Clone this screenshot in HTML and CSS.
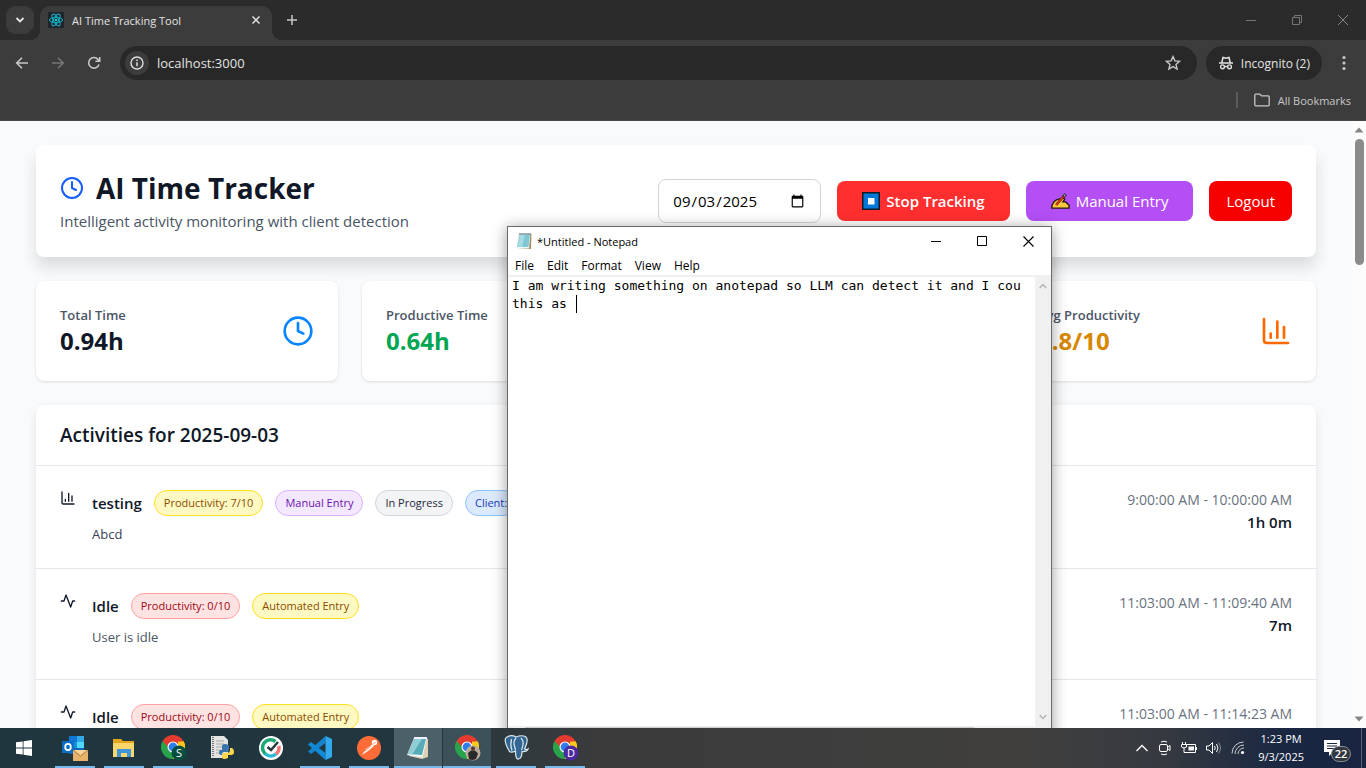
FILE: index.html
```html
<!DOCTYPE html>
<html lang="en-US">
<head>
<meta charset="utf-8">
<title>AI Time Tracking Tool</title>
<link rel="stylesheet" href="styles.css">
</head>
<body>
<svg class="defs" aria-hidden="true">
  <symbol id="clock" viewBox="0 0 24 24"><circle cx="12" cy="12" r="10"/><path d="M12 6v6l4 2"/></symbol>
  <symbol id="chart" viewBox="0 0 24 24"><path d="M3 3v16a2 2 0 0 0 2 2h16M8 17v-3M13 17V5M18 17V9"/></symbol>
  <symbol id="pulse" viewBox="0 0 24 24"><path d="M22 12h-3l-3 9L9 3 6 12H2"/></symbol>
  <symbol id="chrome" viewBox="0 0 24 24">
    <path fill="#e33b2e" d="M12 12 1.600 6A12 12 0 0 1 22.400 6z"/>
    <path fill="#fdc81c" d="M12 12 22.400 6A12 12 0 0 1 12 24z"/>
    <path fill="#28a34c" d="M12 12V24A12 12 0 0 1 1.600 6z"/>
    <path fill="#e33b2e" d="M12 6.500h10.700L22.400 6H12zM1.600 6l5.600 8.700L9 8z"/>
    <path fill="#28a34c" d="M1.600 6l5.600 9 5 2z"/>
    <path fill="#fdc81c" d="M12 24l5-9.200V6.500h5.700A12 12 0 0 1 12 24z"/>
    <circle cx="12" cy="12" r="5.500" fill="#fff"/><circle cx="12" cy="12" r="4.400" fill="#2f7de9"/>
  </symbol>
</svg>

<header class="browser">
  <div class="tabstrip">
    <button class="tab-search" aria-label="Search tabs"><svg width="10" height="10" viewBox="0 0 10 10"><path d="M1.500 3 5 6.500 8.500 3" fill="none" stroke="#e3e3e3" stroke-width="1.800"/></svg></button>
    <div class="tab">
      <svg width="16" height="16" viewBox="0 0 16 16"><rect width="16" height="16" rx="1" fill="#20232a"/><g fill="none" stroke="#12b5cb" stroke-width="1"><ellipse cx="8" cy="8" rx="6.600" ry="2.600"/><ellipse cx="8" cy="8" rx="6.600" ry="2.600" transform="rotate(60 8 8)"/><ellipse cx="8" cy="8" rx="6.600" ry="2.600" transform="rotate(120 8 8)"/></g><circle cx="8" cy="8" r="1.300" fill="#12d5eb"/></svg>
      <span class="tab-title">AI Time Tracking Tool</span>
      <button class="plain" aria-label="Close tab"><svg width="10" height="10" viewBox="0 0 10 10"><path d="M1.500 1.500l7 7m0-7l-7 7" stroke="#e3e3e3" stroke-width="1.500"/></svg></button>
    </div>
    <button class="plain new-tab" aria-label="New tab"><svg width="12" height="12" viewBox="0 0 12 12"><path d="M6 1v10M1 6h10" stroke="#c7c7c7" stroke-width="1.500"/></svg></button>
    <div class="window-buttons">
      <button class="plain" aria-label="Minimize"><svg width="12" height="12" viewBox="0 0 12 12"><path d="M1 6.500h10" stroke="#757575"/></svg></button>
      <button class="plain" aria-label="Restore"><svg width="12" height="12" viewBox="0 0 12 12"><path d="M1.500 3.500h7v7h-7zM3.500 3.500v-2h7v7h-2" fill="none" stroke="#757575"/></svg></button>
      <button class="plain" aria-label="Close"><svg width="12" height="12" viewBox="0 0 12 12"><path d="M1 1l10 10M11 1 1 11" stroke="#858585"/></svg></button>
    </div>
  </div>
  <div class="toolbar">
    <button class="plain nav" aria-label="Back"><svg width="14" height="14" viewBox="0 0 14 14"><path d="M13 7H2M7 1.700 1.700 7 7 12.300" fill="none" stroke="#c7c7c7" stroke-width="1.600"/></svg></button>
    <button class="plain nav" aria-label="Forward"><svg width="14" height="14" viewBox="0 0 14 14"><path d="M1 7h11M7 1.700 12.300 7 7 12.300" fill="none" stroke="#757575" stroke-width="1.600"/></svg></button>
    <button class="plain nav" aria-label="Reload"><svg width="14" height="14" viewBox="0 0 14 14"><path d="M12 8.500A5.300 5.300 0 1 1 11 3.400L12.500 5M12.700 1v4.300H8.400" fill="none" stroke="#c7c7c7" stroke-width="1.600"/></svg></button>
    <div class="address">
      <button class="site-info" aria-label="View site information"><svg width="14" height="14" viewBox="0 0 14 14"><circle cx="7" cy="7" r="6" fill="none" stroke="#dedede" stroke-width="1.400"/><path d="M7 6.200v4M7 3.600v1.500" stroke="#dedede" stroke-width="1.500"/></svg></button>
      <input class="url" aria-label="Address" value="localhost:3000">
      <button class="plain" aria-label="Bookmark this tab"><svg width="16" height="16" viewBox="0 0 16 16"><path d="M8 1.600l1.900 4.300 4.700.4-3.600 3.100 1.100 4.600L8 11.600 3.900 14 5 9.400 1.400 6.300l4.700-.4z" fill="none" stroke="#c7c7c7" stroke-width="1.400"/></svg></button>
    </div>
    <button class="incognito"><svg width="16" height="16" viewBox="0 0 16 16"><path d="M1 8h14M3.800 7.500 5 2.500l3 .7 3-.7 1.200 5" fill="none" stroke="#e3e3e3" stroke-width="1.500"/><g fill="none" stroke="#e3e3e3" stroke-width="1.400"><circle cx="4.500" cy="11.800" r="1.900"/><circle cx="11.500" cy="11.800" r="1.900"/><path d="M6.400 11.500h3.200"/></g></svg>Incognito (2)</button>
    <button class="plain more" aria-label="Menu"><svg width="4" height="16" viewBox="0 0 4 16" fill="#c7c7c7"><circle cx="2" cy="2.500" r="1.600"/><circle cx="2" cy="8" r="1.600"/><circle cx="2" cy="13.500" r="1.600"/></svg></button>
  </div>
  <div class="bookmarks">
    <span class="divider"></span>
    <button class="plain all-bookmarks"><svg width="16" height="14" viewBox="0 0 16 14"><path d="M.800 11.800V2.200q0-1 1-1h4l1.700 1.700h6.700q1 0 1 1v7.900q0 1-1 1H1.800q-1 0-1-1z" fill="none" stroke="#c7c7c7" stroke-width="1.300"/></svg>All Bookmarks</button>
  </div>
</header>

<div class="viewport">
  <main class="page">
    <section class="card masthead">
      <div>
        <h1><svg class="line blue" width="24" height="24"><use href="#clock"/></svg>AI Time Tracker</h1>
        <p>Intelligent activity monitoring with client detection</p>
      </div>
      <div class="actions">
        <input class="date" type="date" value="2025-09-03" aria-label="Date">
        <button class="btn stop"><svg width="18" height="18" viewBox="0 0 18 18"><path d="M0 0h18v18H0z" fill="#111c2b"/><path d="M1.500 1.500h15v15h-15z" fill="#0078d7"/><path d="M6 6h6.500v6.500H6z" fill="#fff"/></svg>Stop Tracking</button>
        <button class="btn manual"><svg width="19" height="18" viewBox="0 0 20 18"><path d="M1 16.500v-2.500Q3 8 8 7l5-1 1.500 1-2 3h3l3.500 3.500v3z" fill="#ffc83d" stroke="#1d1712" stroke-width="1.400"/><path d="M5.500 13 14 3.500" stroke="#1d1712" stroke-width="2.600"/><path d="M5 13.500 14 3.500" stroke="#f03a17" stroke-width="1.700"/><path d="M13 4.500l2.500-2.700" stroke="#1d1712" stroke-width="3"/><path d="M13.500 4l1.500-1.700" stroke="#bbb" stroke-width="1.300"/></svg>Manual Entry</button>
        <button class="btn logout">Logout</button>
      </div>
    </section>

    <section class="stats">
      <div class="card stat"><div><h2>Total Time</h2><strong>0.94h</strong></div><svg class="line sky" width="32" height="32"><use href="#clock"/></svg></div>
      <div class="card stat"><div><h2>Productive Time</h2><strong class="green">0.64h</strong></div></div>
      <div class="card stat"></div>
      <div class="card stat"><div><h2>Avg Productivity</h2><strong class="amber">2.8/10</strong></div><svg class="line orange" width="32" height="32"><use href="#chart"/></svg></div>
    </section>

    <section class="card activities">
      <h2>Activities for 2025-09-03</h2>
      <article>
        <svg class="line" width="16" height="16"><use href="#chart"/></svg>
        <div class="info">
          <div class="tags"><h3>testing</h3><span class="tag yellow">Productivity: 7/10</span><span class="tag purple">Manual Entry</span><span class="tag gray">In Progress</span><span class="tag lightblue">Client:</span></div>
          <p>Abcd</p>
        </div>
        <div class="when"><time>9:00:00 AM - 10:00:00 AM</time><b>1h 0m</b></div>
      </article>
      <article class="auto">
        <svg class="line" width="16" height="16"><use href="#pulse"/></svg>
        <div class="info">
          <div class="tags"><h3>Idle</h3><span class="tag red">Productivity: 0/10</span><span class="tag yellow">Automated Entry</span></div>
          <p>User is idle</p>
        </div>
        <div class="when"><time>11:03:00 AM - 11:09:40 AM</time><b>7m</b></div>
      </article>
      <article class="auto">
        <svg class="line" width="16" height="16"><use href="#pulse"/></svg>
        <div class="info">
          <div class="tags"><h3>Idle</h3><span class="tag red">Productivity: 0/10</span><span class="tag yellow">Automated Entry</span></div>
        </div>
        <div class="when"><time>11:03:00 AM - 11:14:23 AM</time></div>
      </article>
    </section>
  </main>
  <div class="scrollbar">
    <svg width="10" height="6" viewBox="0 0 10 6"><path d="M5 .500 9.500 5.500h-9z" fill="#858585"/></svg>
    <span class="thumb"></span>
    <svg width="10" height="6" viewBox="0 0 10 6"><path d="M5 5.500 9.500.500h-9z" fill="#858585"/></svg>
  </div>
</div>

<section class="notepad" aria-label="Notepad">
  <div class="np-title">
    <svg width="16" height="18" viewBox="0 0 16 18"><path d="M3 2h12.500L15 17h-3L1 16z" fill="#a88f63"/><path d="M3 2h11.500L13 16.500H.500z" fill="#eef8fa"/><path d="M3.500 3h10.500L12.500 15H1z" fill="#80c7d6"/><path d="M4 3h5L6 15H1.500z" fill="#a5dbe5"/><path d="M3.500 2h11" stroke="#3d5c66" stroke-width="2" stroke-dasharray="1 1"/></svg>
    <span>*Untitled - Notepad</span>
    <div class="np-buttons">
      <button class="plain" aria-label="Minimize"><svg width="11" height="11" viewBox="0 0 11 11"><path d="M0 5.500h10" stroke="#000"/></svg></button>
      <button class="plain" aria-label="Maximize"><svg width="11" height="11" viewBox="0 0 11 11"><path d="M.500.500h9v9h-9z" fill="none" stroke="#000"/></svg></button>
      <button class="plain" aria-label="Close"><svg width="11" height="11" viewBox="0 0 11 11"><path d="M.500.500l10 10m0-10l-10 10" stroke="#000" stroke-width="1.100"/></svg></button>
    </div>
  </div>
  <nav class="np-menu"><button class="plain">File</button><button class="plain">Edit</button><button class="plain">Format</button><button class="plain">View</button><button class="plain">Help</button></nav>
  <div class="np-body">
    <textarea aria-label="Text" spellcheck="false" wrap="off">I am writing something on anotepad so LLM can detect it and I cou
this as </textarea>
    <span class="caret"></span>
    <div class="np-vscroll">
      <svg width="8" height="6" viewBox="0 0 8 6"><path d="M.700 5 4 1.500 7.300 5" fill="none" stroke="#b5b5b5" stroke-width="1.500"/></svg>
      <svg width="8" height="6" viewBox="0 0 8 6"><path d="M.700 1 4 4.500 7.300 1" fill="none" stroke="#b5b5b5" stroke-width="1.500"/></svg>
    </div>
  </div>
  <div class="np-hscroll"><span></span></div>
</section>

<footer class="taskbar">
  <button class="start" aria-label="Start"><svg width="16" height="16" viewBox="0 0 16 16" fill="#fff"><path d="M0 2.300 6.700 1.400v6.200H0zM7.500 1.300 16 0v7.600H7.500zM0 8.400h6.700v6.200L0 13.700zM7.500 8.400H16V16l-8.500-1.300z"/></svg></button>
  <button class="app open" aria-label="Outlook"><svg width="28" height="26" viewBox="0 0 28 26"><path d="M8 1h15v18H8z" fill="#1066b5"/><path d="M8 1h8v6H8z" fill="#0f78d4"/><path d="M16 1h7v6h-7z" fill="#32a9e7"/><path d="M16 7h7v6h-7z" fill="#50d9ff"/><path d="M8 7h8v6H8z" fill="#1490df"/><path d="M1 6h12v12H1z" fill="#0a6fc4"/><ellipse cx="7" cy="12" rx="2.800" ry="3.200" fill="none" stroke="#fff" stroke-width="1.800"/><path d="M12 15h15v11H12z" fill="#e8b26b"/><path d="M12 15l7.500 6 7.500-6" fill="#f8d49a" stroke="#a87636"/></svg></button>
  <button class="app open" aria-label="File Explorer"><svg width="24" height="24" viewBox="0 0 24 24"><path d="M1 3h8l2 2h11v6H1z" fill="#e4a61a"/><path d="M1 7h21v14H1z" fill="#fbd66b"/><path d="M5 21v-8h14v8h-4v-4H9v4z" fill="#3f94db"/></svg></button>
  <button class="app open" aria-label="Chrome, profile S"><svg width="28" height="26" viewBox="0 0 28 26"><use href="#chrome" x="2" y="0" width="24" height="24"/><circle cx="20" cy="18" r="7.500" fill="#064e3e"/><text class="badge" x="20" y="22">S</text></svg></button>
  <button class="app" aria-label="Python"><svg width="26" height="26" viewBox="0 0 26 26"><path d="M2 1h13l4 4v18H2z" fill="#e4e4e2"/><path d="M4 2v20" stroke="#777" stroke-width="2" stroke-dasharray="1 1"/><path d="M7 6h8M7 9h8M7 12h6M7 15h3M7 18h3" stroke="#a7a7a7"/><path d="M13 15v-4q0-2 3-2t4 2v4q0 2-2 2h-3q-2 0-2 3h-1q-2 0-2-3t3-2z" fill="#3875ac"/><path d="M21 13h2q2 1 2 4t-3 3h-3q0 4-3 4t-3-2v-2q0-2 2-2h3q3 0 3-3z" fill="#ffd748"/></svg></button>
  <button class="app" aria-label="Tracker"><svg width="24" height="24" viewBox="0 0 24 24"><circle cx="12" cy="12" r="12" fill="#fff"/><g fill="none" stroke-width="3.600"><path d="M16.500 5.500A8 8 0 1 0 6.500 18" stroke="#19a974"/><path d="M6.500 18A8 8 0 0 0 17 18" stroke="#26b9d6"/><path d="M17 18a8 8 0 0 0 2.800-8" stroke="#ef7777"/></g><path d="M8.500 11l3.500 3 7-8" fill="none" stroke="#263a3d" stroke-width="2.400"/></svg></button>
  <button class="app open" aria-label="Visual Studio Code"><svg width="24" height="24" viewBox="0 0 24 24"><path d="M17.500 0v7L3 18 0 15.500z" fill="#1683c9"/><path d="M0 8.500 3 6l14.500 11v7z" fill="#1289d4"/><path d="M17.500 0 24 3v18l-6.500 3z" fill="#32a9ef"/></svg></button>
  <button class="app open" aria-label="Postman"><svg width="24" height="24" viewBox="0 0 24 24"><circle cx="12" cy="12" r="12" fill="#ff6c37"/><circle cx="17.500" cy="6.500" r="2.700" fill="#fff"/><path d="M15 8.500l2 1.500-6 5-6 4 4-6z" fill="#fff"/><path d="M16.500 7.500l2-1M8 15l6-5" stroke="#ff6c37" stroke-width=".8"/></svg></button>
  <button class="app open active" aria-label="Notepad"><svg width="24" height="24" viewBox="0 0 24 24"><path d="M20 2l2 1v18l-6 2-13-3z" fill="#ddd0b0"/><path d="M8 2h13l-4.500 19.500L1 19z" fill="#eefafa"/><path d="M8 3h12l-4 16-14-1z" fill="#58abb9"/><path d="M8 3h8L6.500 18.300 2 18z" fill="#90cdd5"/><path d="M8 2h13" stroke="#eef" stroke-width="2"/></svg></button>
  <button class="app open grouped" aria-label="Chrome, incognito"><svg width="28" height="26" viewBox="0 0 28 26"><use href="#chrome" x="2" y="0" width="24" height="24"/><circle cx="20" cy="18" r="7.500" fill="#b9aa9b"/><path d="M16 24l-1-6 3-2.500h4l3 3-2 5.500q-4 2-7 0z" fill="#29292b"/><circle cx="20" cy="13.500" r="2" fill="#54382c"/></svg></button>
  <button class="app open" aria-label="pgAdmin"><svg width="25" height="25" viewBox="0 0 25 25"><path d="M4 1.500Q8-.5 12 2q6-2.500 10 0 3 3-1.500 12 2 1 3.500 0-1 3-6 2.500 0 7-3.500 7.500-3 .5-3-8-4 2-6 .5Q0 7 1.500 3.500 2.500 2 4 1.500z" fill="#336791" stroke="#dbe8ef" stroke-width="1.200"/><path d="M8 15.500Q6 10 7.500 4M12 3q-3 3-1.500 8l1 4M17 3q4 4 .5 12" fill="none" stroke="#dbe8ef" stroke-width="1.200"/></svg></button>
  <button class="app open" aria-label="Chrome, profile D"><svg width="28" height="26" viewBox="0 0 28 26"><use href="#chrome" x="2" y="0" width="24" height="24"/><circle cx="20" cy="18" r="7.500" fill="#4c2a9e"/><text class="badge" x="20" y="22">D</text></svg></button>
  <div class="tray">
    <svg width="14" height="14" viewBox="0 0 14 14"><path d="M1.500 10 7 4.500l5.500 5.500" stroke-width="1.300"/></svg>
    <svg width="14" height="16" viewBox="0 0 14 16"><rect x="1.500" y="4.500" width="8" height="7" rx="1.500"/><path d="M9.500 7.500l2.500-2v5l-2.500-2M3 2q3-1.500 6 0M3 14q3 1.500 6 0"/></svg>
    <svg width="16" height="14" viewBox="0 0 16 14"><path d="M5.500 3.500h9v8h-8M15.500 6v3M.500 3.500h5v2.500q-2.500 2-5 0zM1.500 1v2.500M4.500 1v2.500M3 7v4.500h4"/><path d="M7.500 5.500h5.500v4H7.500z" fill="#fff" stroke="none"/></svg>
    <svg width="16" height="14" viewBox="0 0 16 14"><path d="M.500 5h2.500L6.500 1.500v11L3 9H.500zM8.500 5q1.500 2 0 4M10.500 3q3 4 0 8"/><path d="M12.500 1.500q4 5.500 0 11" stroke="#858b92"/></svg>
    <svg width="14" height="14" viewBox="0 0 14 14"><path d="M1 12.500A11.500 11.500 0 0 1 12.500 1M4 13A9 9 0 0 1 13 4M7 13a6 6 0 0 1 6-6" stroke="#c9cbd0"/><circle cx="11.500" cy="11.500" r="1.600" fill="#fff" stroke="none"/></svg>
    <div class="time"><span>1:23 PM</span><span>9/3/2025</span></div>
    <button class="notify" aria-label="Notifications"><svg width="16" height="16" viewBox="0 0 16 16"><path d="M0 0h16v12H9l-4 4v-4H0z" fill="#fff" stroke="none"/><path d="M3 3.500h10M3 6h10M3 8.500h7" stroke="#1a2540"/></svg><span>22</span></button>
  </div>
</footer>
</body>
</html>
```

FILE: styles.css
```css
* { box-sizing: border-box; }
body {
  margin: 0;
  height: 100vh;
  display: flex;
  flex-direction: column;
  position: relative;
  overflow: hidden;
  font-family: "Open Sans", "Noto Sans", sans-serif;
  font-size: 15px;
  color: #101828;
}
h1, h2, h3, p { margin: 0; }
button { font: inherit; color: inherit; border: 0; padding: 0; }
svg { flex: none; }
.defs { position: absolute; width: 0; height: 0; }
.plain { background: none; display: flex; align-items: center; justify-content: center; }

/* Browser window */
.browser { background: #3c3c3c; color: #e3e3e3; font-size: 12px; height: 121px; flex: none; border-bottom: 1px solid #474747; }
.tabstrip { background: #2b2b2b; height: 40px; display: flex; align-items: flex-end; }
.tab-search { width: 28px; height: 28px; margin: 0 6px; align-self: center; border-radius: 9px; background: #3c3c3c; display: flex; align-items: center; justify-content: center; }
.tab { position: relative; width: 232px; height: 34px; padding: 0 11px 6px 8px; display: flex; align-items: center; gap: 8px; background: #3c3c3c; border-radius: 10px 10px 0 0; }
.tab::before, .tab::after { content: ""; position: absolute; bottom: 0; width: 10px; height: 10px; }
.tab::before { left: -10px; background: radial-gradient(circle at 0 0, #2b2b2b 10px, #3c3c3c 10px); }
.tab::after { right: -10px; background: radial-gradient(circle at 100% 0, #2b2b2b 10px, #3c3c3c 10px); }
.tab-title { flex: 1; font-size: 11px; }
.new-tab { width: 40px; height: 40px; }
.window-buttons { margin-left: auto; display: flex; height: 40px; }
.window-buttons .plain { width: 46px; }
.toolbar { display: flex; align-items: center; height: 46px; padding: 0 12px 0 4px; }
.nav { width: 36px; height: 34px; }
.address { flex: 1; height: 34px; margin: 0 9px 0 8px; padding: 0 16px 0 5px; border-radius: 17px; background: #282828; display: flex; align-items: center; gap: 8px; }
.site-info { width: 24px; height: 24px; border-radius: 12px; background: #3c3c3c; display: flex; align-items: center; justify-content: center; }
.url { flex: 1; border: 0; padding: 0; background: none; color: #e3e3e3; font: inherit; font-size: 13px; }
.incognito { height: 34px; padding: 0 12px; border-radius: 17px; background: #282828; display: flex; align-items: center; gap: 7px; }
.more { width: 20px; margin-left: 12px; }
.bookmarks { display: flex; align-items: center; justify-content: flex-end; gap: 16px; height: 28px; padding-right: 15px; color: #c7c7c7; font-size: 11px; }
.divider { width: 2px; height: 16px; background: #5c5c5c; }
.all-bookmarks { gap: 8px; }

/* Web page */
.viewport { flex: 1; min-height: 0; display: flex; background: #f9fafb; }
.page { flex: 1; min-width: 0; padding: 24px 36px 0; overflow: hidden; display: flex; flex-direction: column; gap: 24px; }
.scrollbar { width: 14px; padding: 6px 0; background: #fcfcfc; display: flex; flex-direction: column; align-items: center; gap: 6px; }
.thumb { width: 9px; height: 126px; border-radius: 5px; background: #8b8b8b; margin-bottom: auto; }
.card { flex: none; background: #fff; border-radius: 8px; box-shadow: 0 1px 3px rgba(0,0,0,.12); }
.line { fill: none; stroke: currentColor; stroke-width: 2; stroke-linecap: round; stroke-linejoin: round; }
.blue { color: #155dfc; }
.sky { color: #0a84ff; }
.orange { color: #ff6900; }
.masthead { display: flex; align-items: center; justify-content: space-between; padding: 24px; box-shadow: 0 10px 15px rgba(0,0,0,.12); }
h1 { display: flex; align-items: center; gap: 12px; font-size: 28px; line-height: 38px; font-weight: 700; }
.masthead p { padding-top: 2px; color: #4a5565; line-height: 24px; }
.actions { display: flex; align-items: center; gap: 16px; }
.date { width: 163px; height: 44px; padding: 0 13px; border: 1px solid #d1d5dc; border-radius: 8px; background: #fff; font: inherit; color: #000; }
.btn { height: 40px; padding: 0 25px; display: flex; align-items: center; gap: 6px; border-radius: 8px; color: #fff; }
.stop { background: #ff2f2f; font-weight: 600; }
.manual { background: #b34ff5; }
.logout { background: #f70000; padding: 0 17px; }
.stats { flex: none; display: grid; grid-template-columns: repeat(4, 1fr); gap: 24px; }
.stat { min-height: 100px; padding: 24px; display: flex; align-items: center; justify-content: space-between; }
.stat h2 { font-size: 13px; line-height: 20px; font-weight: 600; color: #4a5565; }
.stat strong { display: block; font-size: 24px; line-height: 32px; }
.green { color: #00a651; }
.amber { color: #d78700; }
.activities { box-shadow: 0 4px 10px rgba(0,0,0,.1); }
.activities h2 { padding: 16px 24px; font-size: 19px; line-height: 28px; font-weight: 600; }
article { display: flex; gap: 16px; padding: 24px; border-top: 1px solid #e5e7eb; }
.auto { padding-bottom: 32px; }
.info { flex: 1; }
.tags { display: flex; align-items: center; gap: 12px; }
h3 { font-size: 15px; line-height: 26px; font-weight: 600; }
.tag { height: 26px; padding: 0 9px; border: 1px solid; border-radius: 13px; font-size: 11px; line-height: 24px; }
.yellow { background: #fef9c2; border-color: #ffdf20; color: #894b00; }
.purple { background: #f3e8ff; border-color: #dab2ff; color: #6e11b0; }
.gray { background: #f3f4f6; border-color: #d1d5dc; color: #1e2939; }
.lightblue { background: #dbeafe; border-color: #8ec5ff; color: #193cb8; }
.red { background: #ffe2e2; border-color: #ffa2a2; color: #9f0712; }
.info p { margin-top: 8px; font-size: 13px; line-height: 20px; color: #364153; }
.auto p { color: #4a5565; }
.when { display: flex; flex-direction: column; align-items: flex-end; font-size: 14px; line-height: 20px; color: #6a7282; }
.when b { font-size: 15px; line-height: 24px; font-weight: 600; color: #101828; }

/* Notepad window */
.notepad { position: absolute; left: 507px; top: 226px; bottom: 24px; width: 545px; display: flex; flex-direction: column; background: #fff; border: 1px solid #6b6b6b; box-shadow: 0 2px 14px rgba(0,0,0,.4); color: #000; font-size: 12px; }
.np-title { height: 28px; padding-left: 8px; display: flex; align-items: center; gap: 5px; font-size: 11px; }
.np-buttons { margin-left: auto; display: flex; height: 28px; }
.np-buttons .plain { width: 46px; }
.np-menu { height: 22px; padding: 0 7px; display: flex; align-items: center; gap: 13px; border-bottom: 2px solid #f0f0f0; font-size: 12px; }
.np-body { position: relative; flex: 1; min-height: 0; display: flex; }
.np-body textarea { flex: 1; min-width: 0; padding: 0 0 0 4px; border: 0; resize: none; outline: 0; overflow: hidden; font: 13px/18px "DejaVu Sans Mono", monospace; color: #000; }
.caret { position: absolute; left: 68px; top: 18px; width: 1px; height: 18px; background: #000; }
.np-vscroll { width: 16px; padding: 6px 0; display: flex; flex-direction: column; align-items: center; justify-content: space-between; background: #f0f0f0; }
.np-hscroll { height: 17px; padding: 1px 17px; background: #f0f0f0; display: flex; }
.np-hscroll span { width: 449px; background: #cdcdcd; }

/* Taskbar */
.taskbar { position: relative; z-index: 1; flex: none; height: 40px; display: flex; gap: 1px; background: linear-gradient(90deg, #20363f 0, #21363f 30%, #3b3b3b 44%, #403f3e 75%, #363a40 85%, #1a2742 94%, #182440 100%); color: #fff; font-size: 12px; }
.start { width: 48px; margin-right: 2px; background: none; display: flex; align-items: center; justify-content: center; }
.app { position: relative; width: 48px; padding-bottom: 1px; background: none; display: flex; align-items: center; justify-content: center; }
.open::after { content: ""; position: absolute; left: 4px; right: 4px; bottom: 0; height: 2px; background: #76b9ed; }
.active { background: #4b6068; }
.grouped { background: #3b5059; }
.active::after, .grouped::after { left: 0; right: 0; }
.badge { font: 11px "Open Sans", sans-serif; fill: #fff; text-anchor: middle; }
.tray { margin: 0 4px 0 auto; padding-right: 7px; border-right: 1px solid #596277; display: flex; align-items: center; gap: 9px; }
.tray svg { fill: none; stroke: #fff; }
.time { display: flex; flex-direction: column; align-items: center; line-height: 18px; padding-left: 4px; font-size: 11px; }
.notify { position: relative; width: 30px; height: 40px; margin-left: 11px; background: none; display: flex; align-items: center; }
.notify span { position: absolute; left: 7px; top: 18px; width: 20px; height: 16px; border-radius: 8px; background: #33383f; border: 1px solid #858b92; font-size: 11px; line-height: 14px; font-weight: 600; text-align: center; }
```
